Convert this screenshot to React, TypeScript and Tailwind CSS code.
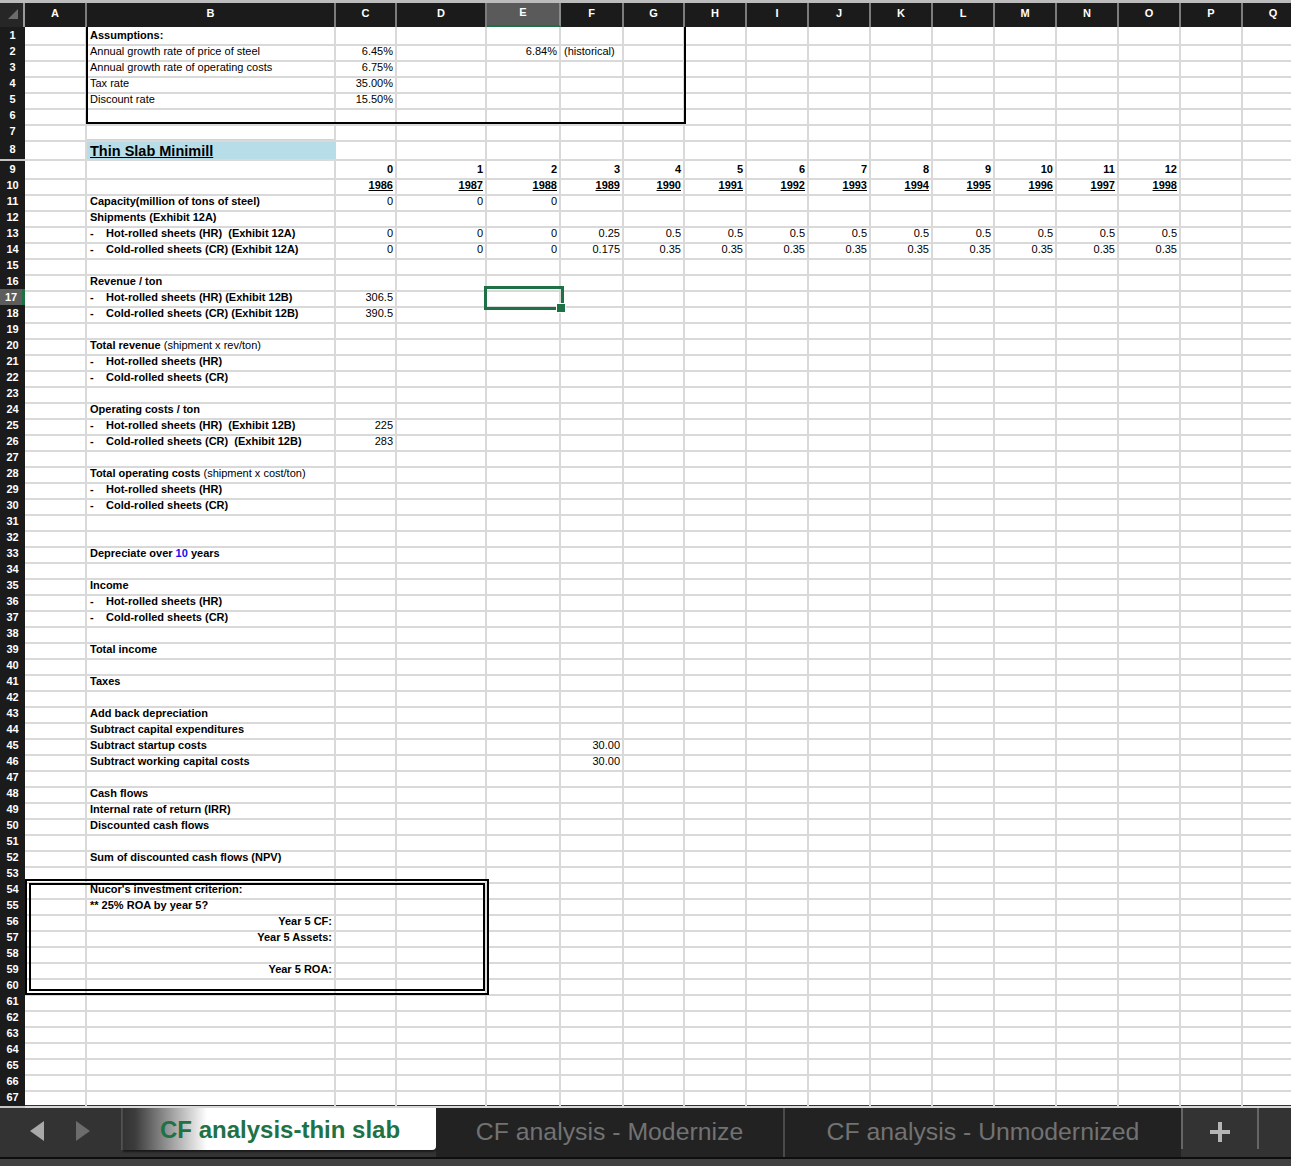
import React from "react";

// spreadsheet layout: row header + columns A..Q
const GRID = "grid grid-cols-[25px_62px_249px_61px_90px_74px_63px_61px_repeat(10,62px)]";
const COLS = ["A", "B", "C", "D", "E", "F", "G", "H", "I", "J", "K", "L", "M", "N", "O", "P", "Q"];
const YEAR_COLS = ["C", "D", "E", "F", "G", "H", "I", "J", "K", "L", "M", "N", "O"];

type Cell = { v: React.ReactNode; r?: boolean; b?: boolean; u?: boolean };
type Row = Record<string, Cell>;

function Dash({ t }: { t: string }) {
  return (
    <span className="flex whitespace-pre">
      <span className="w-[16px]">-</span>
      {t}
    </span>
  );
}

const label = (v: React.ReactNode): Row => ({ B: { v, b: true } });
const num = (v: string): Cell => ({ v, r: true });

const fill = (first: string[], rest: string): Row => {
  const row: Row = {};
  YEAR_COLS.forEach((c, i) => {
    row[c] = num(i < first.length ? first[i] : rest);
  });
  return row;
};

const rows: Record<number, Row> = {
  1: label("Assumptions:"),
  2: {
    B: { v: "Annual growth rate of price of steel" },
    C: num("6.45%"),
    E: num("6.84%"),
    F: { v: "(historical)" },
  },
  3: { B: { v: "Annual growth rate of operating costs" }, C: num("6.75%") },
  4: { B: { v: "Tax rate" }, C: num("35.00%") },
  5: { B: { v: "Discount rate" }, C: num("15.50%") },
  9: Object.fromEntries(YEAR_COLS.map((c, i) => [c, { v: String(i), r: true, b: true }])),
  10: Object.fromEntries(YEAR_COLS.map((c, i) => [c, { v: String(1986 + i), r: true, b: true, u: true }])),
  11: { ...label("Capacity(million of tons of steel)"), C: num("0"), D: num("0"), E: num("0") },
  12: label("Shipments (Exhibit 12A)"),
  13: { ...fill(["0", "0", "0", "0.25"], "0.5"), ...label(<Dash t="Hot-rolled sheets (HR)  (Exhibit 12A)" />) },
  14: { ...fill(["0", "0", "0", "0.175"], "0.35"), ...label(<Dash t="Cold-rolled sheets (CR) (Exhibit 12A)" />) },
  16: label("Revenue / ton"),
  17: { ...label(<Dash t="Hot-rolled sheets (HR) (Exhibit 12B)" />), C: num("306.5") },
  18: { ...label(<Dash t="Cold-rolled sheets (CR) (Exhibit 12B)" />), C: num("390.5") },
  20: label(
    <span>
      Total revenue <span className="font-normal text-black">(shipment x rev/ton)</span>
    </span>
  ),
  21: label(<Dash t="Hot-rolled sheets (HR)" />),
  22: label(<Dash t="Cold-rolled sheets (CR)" />),
  24: label("Operating costs / ton"),
  25: { ...label(<Dash t="Hot-rolled sheets (HR)  (Exhibit 12B)" />), C: num("225") },
  26: { ...label(<Dash t="Cold-rolled sheets (CR)  (Exhibit 12B)" />), C: num("283") },
  28: label(
    <span>
      Total operating costs <span className="font-normal text-black">(shipment x cost/ton)</span>
    </span>
  ),
  29: label(<Dash t="Hot-rolled sheets (HR)" />),
  30: label(<Dash t="Cold-rolled sheets (CR)" />),
  33: label(
    <span>
      Depreciate over <span className="text-[#1010f0]">10</span> years
    </span>
  ),
  35: label("Income"),
  36: label(<Dash t="Hot-rolled sheets (HR)" />),
  37: label(<Dash t="Cold-rolled sheets (CR)" />),
  39: label("Total income"),
  41: label("Taxes"),
  43: label("Add back depreciation"),
  44: label("Subtract capital expenditures"),
  45: { ...label("Subtract startup costs"), F: num("30.00") },
  46: { ...label("Subtract working capital costs"), F: num("30.00") },
  48: label("Cash flows"),
  49: label("Internal rate of return (IRR)"),
  50: label("Discounted cash flows"),
  52: label("Sum of discounted cash flows (NPV)"),
  54: label("Nucor's investment criterion:"),
  55: label("** 25% ROA by year 5?"),
  56: { B: { v: "Year 5 CF:", b: true, r: true } },
  57: { B: { v: "Year 5 Assets:", b: true, r: true } },
  59: { B: { v: "Year 5 ROA:", b: true, r: true } },
};

function SheetCell({ col, row, cell }: { col: string; row: number; cell?: Cell }) {
  const selected = col === "E" && row === 17;
  const title = col === "B" && row === 8;

  if (title) {
    return (
      <div className="flex items-end pl-[3px] bg-[#b7dee8] border-b-2 border-[#d9d9d9]">
        <span className="text-[14.5px] font-bold underline leading-[15px] text-black">Thin Slab Minimill</span>
      </div>
    );
  }

  return (
    <div
      className={`relative flex items-end pb-[3px] border-r-2 border-b-2 border-[#d9d9d9] text-[11px] leading-[12px] whitespace-nowrap text-black ${
        cell?.r ? "justify-end pr-[2px]" : "pl-[3px]"
      } ${cell?.b ? "font-bold" : ""} ${cell?.u ? "underline" : ""}`}
    >
      {cell?.v}
      {selected && (
        <>
          <div className="absolute -left-[3px] -top-[3px] -right-[5px] -bottom-[4px] border-[3px] border-[#1e7145] z-10" />
          <div className="absolute -right-[7px] -bottom-[7px] w-[10px] h-[10px] bg-[#1e7145] border border-white z-20" />
        </>
      )}
    </div>
  );
}

function ColumnHeader() {
  return (
    <div className={`${GRID} h-[24px] bg-[#1b1b1b]`}>
      <div className="relative border-r-2 border-[#9a9a9a] bg-[#262626]">
        <svg className="absolute left-[8px] top-[6px]" width="10" height="10" viewBox="0 0 10 10">
          <polygon points="10,0 10,10 0,10" fill="#6b6b6b" />
        </svg>
      </div>
      {COLS.map((c) => (
        <div
          key={c}
          className={`flex items-center justify-center pb-[4px] border-r-2 text-[11px] font-bold text-white ${
            c === "E" ? "bg-[#5a5a5a] border-[#8a8a8a] border-b-2 border-b-[#1e7145]" : "border-[#7c7c7c]"
          }`}
        >
          {c}
        </div>
      ))}
    </div>
  );
}

function RowHeader({ n }: { n: number }) {
  const active = n === 17;
  return (
    <div
      className={`flex items-center justify-center border-b-2 border-[#c4c4c4] text-[11px] font-bold text-white ${
        active ? "bg-[#5d5d5d] border-r-[3px] border-r-[#1e7145]" : "bg-[#1b1b1b]"
      }`}
    >
      {n}
    </div>
  );
}

function SheetTabs() {
  return (
    <div className="h-[61px] flex flex-col">
      <div className="h-[52px] flex bg-[#333333]">
        <div className="w-[121px] flex items-center pl-[30px] gap-[32px]">
          <svg width="14" height="20" viewBox="0 0 14 20">
            <polygon points="14,0 14,20 0,10" fill="#a9a9a9" />
          </svg>
          <svg width="14" height="20" viewBox="0 0 14 20">
            <polygon points="0,0 0,20 14,10" fill="#6c6c6c" />
          </svg>
        </div>
        <div className="w-[2px] h-[42px] mt-[3px] bg-[#555]" />
        <div className="w-[313px] h-[44px] mt-[1px] flex items-center pl-[37px] pt-[3px] rounded-br-[4px] shadow-[0_2px_2px_rgba(0,0,0,0.5)] bg-[linear-gradient(90deg,#333333_0px,#3c3c3c_12px,#ffffff_84px)]">
          <span className="text-[24px] font-bold text-[#207245]">CF analysis-thin slab</span>
        </div>
        <div className="w-[349px] mt-[2px] flex items-center justify-center bg-[#222222] border-r-2 border-[#4a4a4a]">
          <span className="text-[24.8px] text-[#727272]">CF analysis - Modernize</span>
        </div>
        <div className="w-[396px] mt-[2px] flex items-center justify-center bg-[#222222]">
          <span className="text-[24.8px] text-[#727272]">CF analysis - Unmodernized</span>
        </div>
        <div className="w-[2px] h-[42px] mt-[2px] bg-[#666]" />
        <div className="w-[74px] mt-[2px] flex items-center justify-center">
          <svg width="20" height="20" viewBox="0 0 20 20">
            <rect x="8" y="0" width="4" height="20" fill="#b5b5b5" />
            <rect x="0" y="8" width="20" height="4" fill="#b5b5b5" />
          </svg>
        </div>
        <div className="w-[2px] h-[42px] mt-[2px] bg-[#666]" />
      </div>
      <div className="h-[2px] bg-[#0e0e0e]" />
      <div className="flex-1 bg-[#414141]" />
    </div>
  );
}

export default function App() {
  const rowNums = Array.from({ length: 67 }, (_, i) => i + 1);

  return (
    <div className="w-[1291px] h-[1166px] overflow-hidden flex flex-col bg-white font-['Liberation_Sans',Arial,sans-serif]">
      <div className="h-[3px] bg-[#bcbcbc]" />
      <ColumnHeader />

      <div className="relative">
        {rowNums.map((n) => (
          <div key={n} className={`${GRID} ${n === 8 ? "h-[22px]" : "h-[16px]"}`}>
            <RowHeader n={n} />
            {COLS.map((c) => (
              <SheetCell key={c} col={c} row={n} cell={rows[n]?.[c]} />
            ))}
          </div>
        ))}

        {/* Assumptions box */}
        <div className="absolute left-[86px] top-0 w-[600px] h-[97px] border-x-2 border-b-2 border-black pointer-events-none" />
        {/* Nucor criterion box */}
        <div className="absolute left-[25px] top-[852px] w-[464px] h-[116px] border-[6px] border-double border-black pointer-events-none" />
      </div>

      <SheetTabs />
    </div>
  );
}
